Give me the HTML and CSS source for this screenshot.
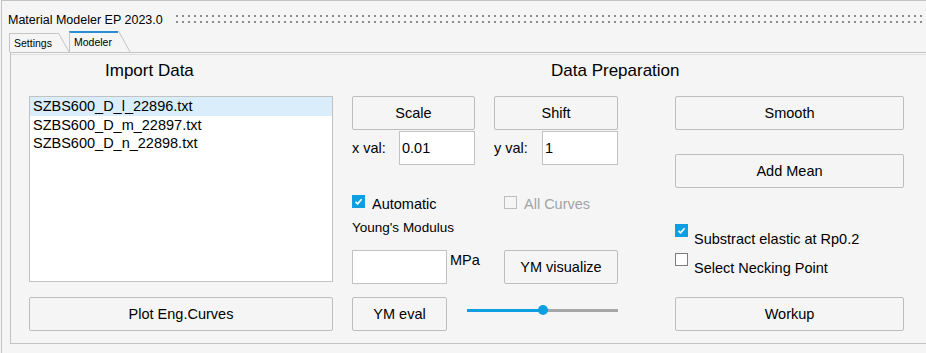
FILE: index.html
```html
<!DOCTYPE html>
<html lang="en">
<head>
  <meta charset="UTF-8">
  <title>Material Modeler EP 2023.0</title>
  <link rel="stylesheet" href="styles.css">
</head>
<body>
<div class="window">
  <div class="titlebar">
    <span class="title">Material Modeler EP 2023.0</span>
    <span class="grip"></span>
  </div>
  <div class="tabs">
    <div class="tab">Settings</div>
    <div class="tab active">Modeler</div>
  </div>

  <div class="panel">
    <div class="section-title import-title">Import Data</div>
    <div class="section-title prep-title">Data Preparation</div>

    <!-- import data -->
    <div class="col">
      <ul class="filelist">
        <li class="selected">SZBS600_D_l_22896.txt</li>
        <li>SZBS600_D_m_22897.txt</li>
        <li>SZBS600_D_n_22898.txt</li>
      </ul>
      <button class="btn plot-btn">Plot Eng.Curves</button>
    </div>

    <!-- scale / shift / young's modulus -->
    <div class="col">
      <div class="pair">
        <button class="btn">Scale</button>
        <button class="btn">Shift</button>
      </div>
      <div class="pair vals">
        <div class="field"><span class="field-label">x val:</span><input class="entry" type="text" value="0.01"></div>
        <div class="field"><span class="field-label">y val:</span><input class="entry" type="text" value="1"></div>
      </div>
      <div class="checks">
        <div class="check">
          <span class="box checked">
            <svg width="13" height="13" viewBox="0 0 13 13"><polyline points="3.5,6.8 5.6,8.8 9.6,4.2" fill="none" stroke="#fff" stroke-width="1.6"/></svg>
          </span>
          <span class="check-label">Automatic</span>
        </div>
        <div class="check disabled">
          <span class="box"></span>
          <span class="check-label">All Curves</span>
        </div>
      </div>
      <div class="small-label">Young's Modulus</div>
      <div class="ym-row">
        <input class="entry ym-entry" type="text" value="">
        <span class="unit">MPa</span>
        <button class="btn ym-vis">YM visualize</button>
      </div>
      <div class="ym-row eval-row">
        <button class="btn ym-eval">YM eval</button>
        <div class="slider"><span class="thumb"></span></div>
      </div>
    </div>

    <!-- smoothing / workup -->
    <div class="col col-right">
      <button class="btn">Smooth</button>
      <button class="btn mean-btn">Add Mean</button>
      <div class="check opt first-opt">
        <span class="box checked">
          <svg width="13" height="13" viewBox="0 0 13 13"><polyline points="3.5,6.8 5.6,8.8 9.6,4.2" fill="none" stroke="#fff" stroke-width="1.6"/></svg>
        </span>
        <span class="check-label">Substract elastic at Rp0.2</span>
      </div>
      <div class="check opt">
        <span class="box plain"></span>
        <span class="check-label">Select Necking Point</span>
      </div>
      <button class="btn workup-btn">Workup</button>
    </div>
  </div>
</div>
</body>
</html>
```

FILE: styles.css
```css
* {
  margin: 0;
  padding: 0;
  box-sizing: border-box;
}

body {
  background: #f5f5f5;
  font-family: "Liberation Sans", Arial, sans-serif;
  color: #000;
  overflow: hidden;
}

.window {
  margin-left: 1px;
  height: 353px;
  border-top: 1px solid #c4c4c4;
  border-left: 1px solid #c4c4c4;
}

.titlebar {
  display: flex;
  align-items: flex-start;
  height: 30px;
  padding: 11px 4px 0 6px;
}

.title {
  width: 168px;
  font-size: 12.5px;
  line-height: 16px;
  white-space: nowrap;
}

.grip {
  flex: 1;
  height: 8px;
  margin-top: 3px;
  background:
    linear-gradient(to right, #8c8c8c 2px, transparent 2px) 0 0 / 6px 2px repeat-x,
    linear-gradient(to right, #8c8c8c 2px, transparent 2px) 0 6px / 6px 2px repeat-x;
}

/* notebook tabs */
.tabs {
  display: flex;
  align-items: flex-end;
  height: 21px;
  padding-left: 7px;
}

.tab {
  position: relative;
  height: 19px;
  padding: 0 6px 0 4px;
  margin-right: 11px;
  border-top: 1px solid #c4c4c4;
  border-left: 1px solid #c4c4c4;
  font-size: 10.5px;
  line-height: 18px;
}

.tab::after {
  content: "";
  position: absolute;
  top: -1px;
  right: -1px;
  width: 1px;
  height: 19px;
  background: #c4c4c4;
  transform-origin: top left;
  transform: skewX(29deg);
}

.tab.active {
  height: 21px;
  border-top: 2px solid #2a8fd2;
  line-height: 19px;
}

.tab.active::after {
  top: -2px;
  height: 21px;
}

/* main panel */
.panel {
  display: grid;
  grid-template-columns: 304px 266px 267px;
  grid-template-rows: 43px auto;
  column-gap: 19px;
  height: 292px;
  margin-left: 8px;
  padding-left: 18px;
  border-top: 1px solid #c4c4c4;
  border-left: 1px solid #c4c4c4;
  border-bottom: 1px solid #c4c4c4;
  box-shadow: inset 0 1px 0 #f5f5f5, inset 0 2px 0 #e0e0e0;
}

.section-title {
  padding-top: 8px;
  font-size: 17px;
  line-height: 20px;
  white-space: nowrap;
}

.import-title {
  padding-left: 76px;
}

.prep-title {
  grid-column: 2 / 4;
  padding-left: 199px;
}

.col {
  display: flex;
  flex-direction: column;
}

.col-right {
  padding-left: 38px;
}

.btn {
  height: 34px;
  border: 1px solid #bdbdbd;
  border-radius: 2px;
  background: #f5f5f5;
  font-family: inherit;
  font-size: 14.5px;
  color: #000;
}

.filelist {
  list-style: none;
  height: 186px;
  border: 1px solid #c2c2c2;
  background: #fff;
  font-size: 14.5px;
  line-height: 18.5px;
}

.filelist li {
  padding-left: 3px;
}

.filelist li.selected {
  background: #d9eefa;
}

.plot-btn {
  margin-top: 15px;
}

.pair {
  display: grid;
  grid-template-columns: 123px 124px;
  column-gap: 19px;
}

.vals {
  margin-top: 1px;
}

.field {
  display: flex;
  align-items: center;
}

.field-label {
  width: 47px;
  font-size: 14.5px;
}

.field:last-child .field-label {
  width: 48px;
}

.entry {
  flex: 1;
  min-width: 0;
  height: 34px;
  padding-left: 2px;
  border: 1px solid #c2c2c2;
  background: #fff;
  font-family: inherit;
  font-size: 14.5px;
  color: #000;
  outline: none;
}

.checks {
  display: grid;
  grid-template-columns: 152px 1fr;
  margin-top: 30px;
}

.check {
  display: flex;
  align-items: flex-start;
}

.box {
  display: block;
  flex: none;
  width: 13px;
  height: 13px;
  border: 1px solid #bdbdbd;
  background: #f5f5f5;
}

.box.checked {
  border: none;
  background: #0e9fe2;
}

.box.checked svg {
  display: block;
}

.box.plain {
  border-color: #7d7d7d;
  background: #fff;
}

.check-label {
  margin-left: 7px;
  font-size: 14.5px;
  line-height: 18px;
  white-space: nowrap;
}

.disabled .box {
  margin-top: 1px;
}

.disabled .check-label {
  color: #a3a3a3;
}

.small-label {
  margin-top: 7px;
  font-size: 13.5px;
  line-height: 16px;
}

.ym-row {
  display: flex;
  align-items: flex-start;
  margin-top: 14px;
}

.ym-entry {
  flex: none;
  width: 95px;
}

.unit {
  margin-left: 3px;
  font-size: 14.5px;
  line-height: 20px;
}

.ym-vis {
  width: 114px;
  margin-left: auto;
}

.eval-row {
  margin-top: 13px;
}

.ym-eval {
  width: 95px;
}

.slider {
  position: relative;
  width: 151px;
  height: 10px;
  margin: 8px 0 0 20px;
  background:
    linear-gradient(to right, #0e9fe2 76px, #a6a6a6 76px) center / 100% 3px no-repeat;
}

.thumb {
  position: absolute;
  top: 0;
  left: 71px;
  width: 10px;
  height: 10px;
  border-radius: 50%;
  background: #0e9fe2;
}

.mean-btn {
  margin-top: 24px;
}

.opt {
  height: 24px;
}

.opt .check-label {
  margin: 6px 0 0 6px;
}

.first-opt {
  margin-top: 36px;
}

.first-opt + .opt {
  margin-top: 5px;
}

.workup-btn {
  margin-top: 20px;
}
```
